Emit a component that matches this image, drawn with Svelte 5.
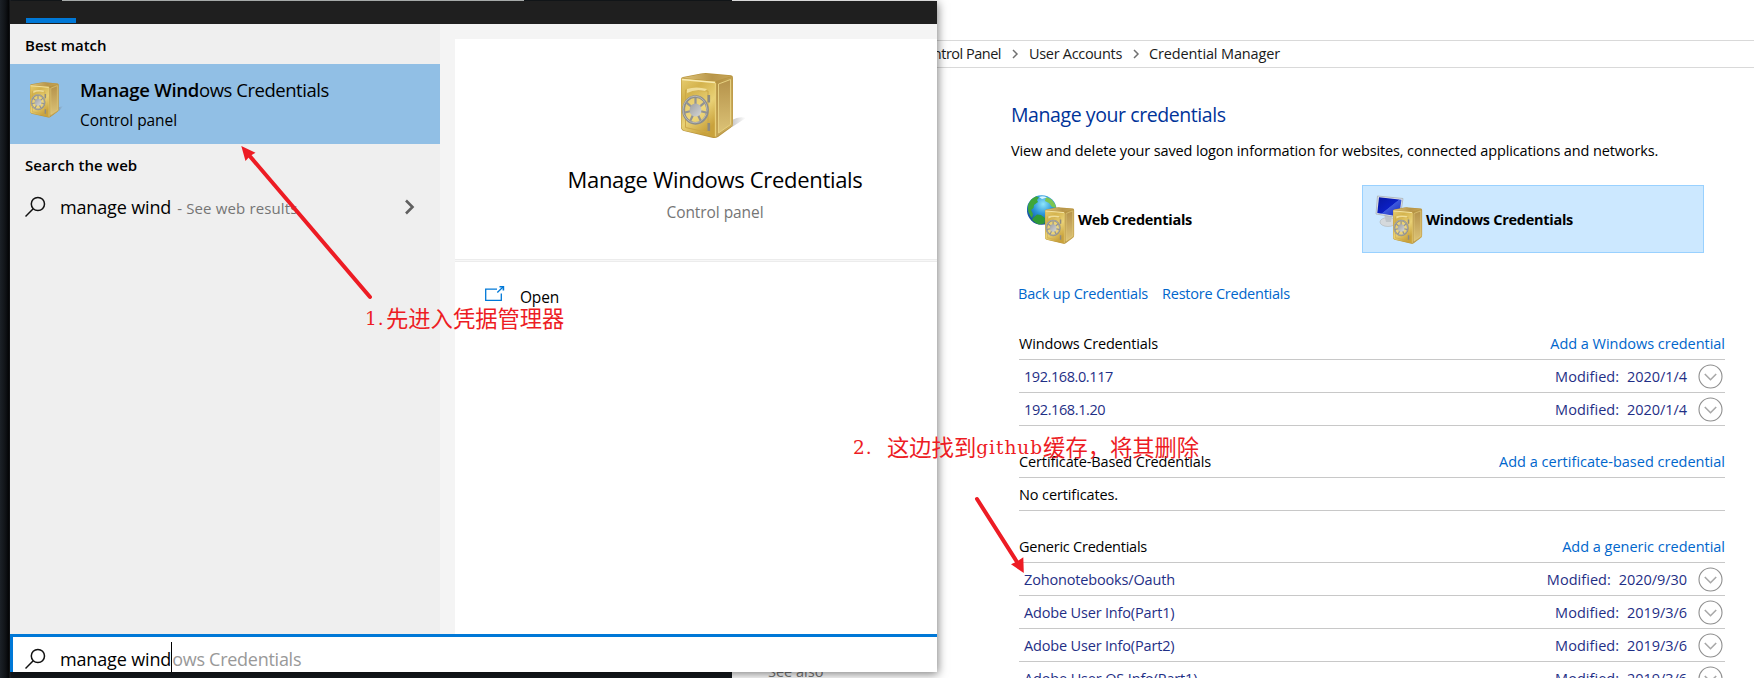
<script>
  const groups = [
    {
      title: 'Windows Credentials', ls: -0.16, link: 'Add a Windows credential', linkLs: -0.03,
      rows: [
        { name: '192.168.0.117', ls: -0.42, date: '2020/1/4' },
        { name: '192.168.1.20', ls: -0.4, date: '2020/1/4' }
      ]
    },
    {
      title: 'Certificate-Based Credentials', ls: -0.11, link: 'Add a certificate-based credential', linkLs: 0,
      empty: 'No certificates.', rows: []
    },
    {
      title: 'Generic Credentials', ls: -0.24, link: 'Add a generic credential', linkLs: -0.02,
      rows: [
        { name: 'Zohonotebooks/Oauth', ls: -0.16, date: '2020/9/30' },
        { name: 'Adobe User Info(Part1)', ls: -0.17, date: '2019/3/6' },
        { name: 'Adobe User Info(Part2)', ls: -0.17, date: '2019/3/6' },
        { name: 'Adobe User OS Info(Part1)', ls: -0.15, date: '2019/3/6' }
      ]
    }
  ];
  const spokes = [0, 51, 103, 154, 206, 257, 309];
</script>

{#snippet safe()}
  <path d="M0 6 Q0 4.500 2 4 L20 0.500 Q24 -0.200 28 0.300 L50 2.200 Q52 2.500 52 5 L52 50 Q52 53 50 54.500 L37 64 Q34.500 65.500 31 64.700 L3 58 Q0 57 0 54 Z" fill="#b8943e" />
  <path d="M1 5 L22 0.800 L51 3 L35 8 Z" fill="url(#lid)" />
  <path d="M34.500 8.500 L51.500 3.800 L51.500 52.500 L34.500 64.500 Z" fill="url(#side)" />
  <path d="M37.500 11 L49.500 6.500 L49.500 51.500 L37.500 60 Z" fill="url(#inset)" stroke="#e6d080" stroke-width="1" />
  <path d="M0.500 5.500 L34.500 8.500 L34.500 64.500 L3 57.500 Q0.500 56.500 0.500 54 Z" fill="url(#front)" />
  <path d="M4.500 17 L27 18 L27 59.500 L4.500 54.500 Z" fill="none" stroke="#cda849" stroke-width="1" />
  <path d="M6 16 Q15 13 26 16 L24 18 Q14 16 6 20 Z" fill="#f5e7ab" opacity=".8" />
  <path d="M1 6.500 L34 9.500" stroke="#f8eab0" stroke-width="1.500" />
  <path d="M34.500 10 V63.500" stroke="#e8cf77" stroke-width="1.300" />
  <path d="M27.800 22 V29.500 M27.800 50 V58" stroke="#8e8b80" stroke-width="2.600" />
  <ellipse cx="14.500" cy="37" rx="12" ry="13.300" fill="#f3dd83" fill-opacity=".55" stroke="#8c8d8b" stroke-width="2.800" />
  <ellipse cx="14" cy="36.500" rx="12" ry="13.300" fill="none" stroke="#c3c3c2" stroke-width=".8" />
  {#each spokes as a}
    <path d="M14.500 37 V25" stroke="#929393" stroke-width="2.200" transform={`rotate(${a} 14.500 37)`} />
  {/each}
  <ellipse cx="14.500" cy="37" rx="6" ry="6.600" fill="url(#hub)" />
{/snippet}

{#snippet magnifier()}
  <svg class="mag" width="22" height="22" viewBox="0 0 22 22" fill="none" stroke="#111" stroke-width="1.500">
    <circle cx="12.900" cy="8" r="6.600" /><path d="M8.200 12.700 L0.500 20.500" />
  </svg>
{/snippet}

<svg class="defs" width="0" height="0" aria-hidden="true">
  <defs>
    <linearGradient id="lid" x1="0" y1="0" x2="1" y2="0"><stop offset="0" stop-color="#dfc478" /><stop offset=".6" stop-color="#b8964b" /><stop offset="1" stop-color="#c7a557" /></linearGradient>
    <linearGradient id="side" x1="0" y1="0" x2="1" y2="1"><stop offset="0" stop-color="#b08d40" /><stop offset="1" stop-color="#d3b564" /></linearGradient>
    <linearGradient id="inset" x1="0" y1="0" x2="0" y2="1"><stop offset="0" stop-color="#b5924a" /><stop offset="1" stop-color="#dcc377" /></linearGradient>
    <linearGradient id="front" x1="0" y1="0" x2=".5" y2="1"><stop offset="0" stop-color="#e6cc70" /><stop offset=".3" stop-color="#d4b34d" /><stop offset=".65" stop-color="#e9d176" /><stop offset="1" stop-color="#c9a23c" /></linearGradient>
    <linearGradient id="hub" x1="0" y1="0" x2="1" y2="1"><stop offset="0" stop-color="#9d9fa1" /><stop offset="1" stop-color="#d5d6d7" /></linearGradient>
    <linearGradient id="shade" x1="0" y1="0" x2="1" y2="0"><stop offset="0" stop-color="#777" stop-opacity=".4" /><stop offset="1" stop-color="#777" stop-opacity="0" /></linearGradient>
    <radialGradient id="sea" cx=".55" cy=".3" r=".75"><stop offset="0" stop-color="#8fe5fb" /><stop offset=".45" stop-color="#2b96da" /><stop offset="1" stop-color="#123a91" /></radialGradient>
    <linearGradient id="screen" x1="0" y1="0" x2="1" y2="1"><stop offset="0" stop-color="#0717a0" /><stop offset=".5" stop-color="#0b1fc4" /><stop offset=".52" stop-color="#3d59dd" /><stop offset="1" stop-color="#1525b4" /></linearGradient>
  </defs>
</svg>

<div class="desktop">
  <main class="explorer">
    <nav class="crumbs">
      <span style:letter-spacing="-.5px">Control Panel</span>
      <svg width="28" height="12" viewBox="0 0 28 12"><path d="M12 2 L16 6 L12 10" /></svg>
      <span style:letter-spacing="-.3px">User Accounts</span>
      <svg width="27" height="12" viewBox="0 0 27 12"><path d="M12 2 L16 6 L12 10" /></svg>
      <span style:letter-spacing="-.13px">Credential Manager</span>
    </nav>
    <div class="body">
      <aside>See also</aside>
      <section class="content">
        <h1>Manage your credentials</h1>
        <p class="lead">View and delete your saved logon information for websites, connected applications and networks.</p>
        <div class="tiles">
          <div class="tile">
            <svg width="48" height="50" viewBox="0 0 48 50">
              <circle cx="14.700" cy="15" r="14.800" fill="url(#sea)" />
              <path d="M1.500 9 Q4 3 9.500 1.200 L12 2.500 L10 5 L11 7 L7 10 L6.500 13 L4 15 L6 19 L5 23 Q-0.500 17 1.500 9 Z" fill="#3fa63a" />
              <path d="M19 2 L24 4 Q29 9 29 13 L25 12 L22 8 L18 6 Z" fill="#7cc650" />
              <path d="M6 23 L10 19.500 L14 20 L18 23 L17.500 28.500 L12 29.500 Q8 28 5 25 Z" fill="#2f9a37" />
              <path d="M12 2 Q16 0.500 20 2.500 L15 4 Z" fill="#d9f7ff" />
              <g transform="translate(18 12.300) scale(.56)">{@render safe()}</g>
            </svg>
            <b style:letter-spacing="-.29px">Web Credentials</b>
          </div>
          <div class="tile selected">
            <svg width="48" height="50" viewBox="0 0 48 50">
              <ellipse cx="13" cy="27" rx="8" ry="4.500" fill="#d5d9dc" stroke="#b5babd" stroke-width=".7" />
              <path d="M9 19 L17 20 L16 27 L11 27 Z" fill="#bfc5c9" />
              <path d="M2.500 1 L28 3.500 L25 23 L1 19 Z" fill="#dfe3e6" stroke="#aab1b6" stroke-width=".8" />
              <path d="M4 2.300 L26.500 4.700 L24 21.500 L2.300 18 Z" fill="url(#screen)" />
              <g transform="translate(18 12.300) scale(.56)">{@render safe()}</g>
            </svg>
            <b style:letter-spacing="-.28px">Windows Credentials</b>
          </div>
        </div>
        <div class="actions">
          <a style:letter-spacing="-.2px">Back up Credentials</a>
          <a style:letter-spacing="-.23px">Restore Credentials</a>
        </div>
        {#each groups as g}
          <div class="group">
            <header>
              <span style:letter-spacing={`${g.ls}px`}>{g.title}</span>
              <a style:letter-spacing={`${g.linkLs}px`}>{g.link}</a>
            </header>
            {#if g.empty}<div class="row empty">{g.empty}</div>{/if}
            {#each g.rows as r}
              <div class="row">
                <span class="name" style:letter-spacing={`${r.ls}px`}>{r.name}</span>
                <span class="mod">Modified:</span>
                <span class="date">{r.date}</span>
                <svg width="25" height="25" viewBox="0 0 25 25" fill="none">
                  <circle cx="12.500" cy="12.500" r="11.500" stroke="#8f8f8f" stroke-width="1.100" />
                  <path d="M6.800 10 L12.500 15.700 L18.200 10" stroke="#a8a8a8" stroke-width="1.600" />
                </svg>
              </div>
            {/each}
          </div>
        {/each}
      </section>
    </div>
  </main>

  <div class="popup">
    <div class="tabs"><i></i></div>
    <div class="panes">
      <div class="results">
        <h2>Best match</h2>
        <div class="hit">
          <svg width="34" height="36" viewBox="0 0 64 67"><g transform="scale(1.040 1.020)"><path d="M52 46 L60 44 L52 54 Z" fill="url(#shade)" />{@render safe()}</g></svg>
          <div>
            <div class="name"><b>Manage Wind</b>ows Credentials</div>
            <div class="kind">Control panel</div>
          </div>
        </div>
        <h2 class="web">Search the web</h2>
        <div class="query">
          {@render magnifier()}
          <span class="typed">manage wind</span>
          <span class="hint">- See web results</span>
          <svg class="go" width="12" height="18" viewBox="0 0 12 18"><path d="M2 2.500 L8.500 9 L2 15.500" fill="none" stroke="#606060" stroke-width="2.600" /></svg>
        </div>
      </div>
      <div class="detail">
        <div class="card">
          <svg width="64" height="66" viewBox="2 0 64 66" overflow="visible"><path d="M51 47 Q58 43 65 45 L51 54 Z" fill="url(#shade)" />{@render safe()}</svg>
          <div class="big">Manage Windows Credentials</div>
          <div class="kind">Control panel</div>
        </div>
        <div class="open">
          <svg width="20" height="16" viewBox="0 0 20 16" fill="none" stroke="#0078d7" stroke-width="1.300">
            <path d="M12 3.200 H0.700 V14.300 H16.300 V7.500" /><path d="M12.300 6.500 L18 1" /><path d="M14.500 0.700 H18.400 V4.600" stroke-width="1.600" />
          </svg>
          <span>Open</span>
        </div>
      </div>
    </div>
    <div class="search">
      {@render magnifier()}
      <span class="typed">manage wind</span><i></i><span class="rest">ows Credentials</span>
    </div>
  </div>

  <svg class="arrows" width="1754" height="678" viewBox="0 0 1754 678" fill="#ed1c24" stroke="#ed1c24">
    <path d="M248 154 L370 297" stroke-width="4" stroke-linecap="round" />
    <path d="M241.300 146 L255.500 152.700 L250 156 L245.500 161 Z" stroke="none" />
    <path d="M977 499 L1017 562" stroke-width="4" stroke-linecap="round" />
    <path d="M1023.800 573 L1023.300 557.300 L1017 561.500 L1011 564.300 Z" stroke="none" />
  </svg>
  <div class="note one"><span>1.</span>先进入凭据管理器</div>
  <div class="note two"><span>2.</span>这边找到<em>github</em>缓存，将其删除</div>
</div>

<style>
  :global(body) { margin: 0; overflow: hidden; }
  .defs { position: absolute; }
  .desktop {
    position: relative; width: 1754px; height: 678px; overflow: hidden; display: flex; justify-content: flex-end;
    background: linear-gradient(90deg, #1d2228 0, #0f1216 6px, #0b0d10 7px, #050607 9px, #24272b 10px, #15191d 11px);
    font: 14.5px "Open Sans", "Noto Sans", sans-serif; color: #000; white-space: nowrap;
  }
  .desktop::before { content: ""; position: absolute; left: 62px; top: 0; width: 462px; height: 1px; background: #c5c9c8; }
  h1, h2, p { margin: 0; font-weight: 400; }
  a { color: #0066cc; }

  .explorer { width: 1022px; height: 678px; background: #fff; padding-top: 40px; box-sizing: border-box; }
  .crumbs {
    display: flex; align-items: center; height: 26px; line-height: 26px; padding-left: 184px;
    border-top: 1px solid #d9d9d9; border-bottom: 1px solid #d9d9d9; color: #1a1a1a;
  }
  .crumbs svg { fill: none; stroke: #707070; stroke-width: 1.5; }
  .body { display: flex; height: 610px; }
  aside { width: 279px; box-sizing: border-box; padding-left: 36px; height: 614px; display: flex; align-items: flex-end; line-height: 20px; color: #767676; flex: none; }
  .content { width: 714px; padding-top: 32px; }
  h1 { font-size: 19.5px; line-height: 30px; letter-spacing: -.42px; color: #003399; }
  .lead { margin-top: 10px; line-height: 22px; letter-spacing: -.13px; }
  .tiles { display: flex; gap: 6px; margin: 23px 0 0 3px; }
  .tile { display: flex; align-items: center; gap: 3px; width: 342px; height: 68px; box-sizing: border-box; padding-left: 12px; border: 1px solid transparent; }
  .tile svg { margin-top: 2px; }
  .selected { background: #cce8ff; border-color: #99d1ff; }
  .actions { display: flex; gap: 14px; margin: 30px 0 27px 7px; line-height: 22px; }
  .group { margin: 0 0 24px 8px; }
  .group header { display: flex; justify-content: space-between; height: 27px; line-height: 24px; border-bottom: 1px solid #c8c8c8; }
  .row { display: flex; align-items: center; height: 32px; line-height: 32px; border-bottom: 1px solid #c8c8c8; padding: 0 2px 0 5px; color: #1f2f86; }
  .row span { padding-top: 1px; height: 31px; }
  .row.empty { height: 31px; padding: 1px 0 0; color: #000; letter-spacing: -.11px; }
  .row .name { flex: 1; }
  .mod { letter-spacing: .04px; }
  .date { margin: 0 11px 0 8px; letter-spacing: -.06px; }

  .popup { position: absolute; left: 10px; top: 1px; width: 927px; height: 671px; display: flex; flex-direction: column; background: #fff; box-shadow: 1px 2px 9px rgba(0, 0, 0, .5); }
  .tabs { height: 23px; background: #1f1f1f; padding: 17px 0 0 16px; box-sizing: border-box; }
  .tabs i { display: block; width: 50px; height: 5px; background: #0078d7; }
  .panes { display: flex; height: 610px; }
  .results { width: 430px; background: #efefef; flex: none; }
  h2 { height: 40px; line-height: 43px; padding-left: 15px; font-size: 15px; font-weight: 600; letter-spacing: 0; }
  h2.web { height: 38px; letter-spacing: .08px; }
  .hit { display: flex; height: 80px; background: #91bfe5; box-sizing: border-box; padding: 13px 0 0 20px; }
  .hit svg { margin: 5px 16px 0 0; flex: none; }
  .hit .name { font-size: 18.5px; line-height: 26px; letter-spacing: -.47px; }
  .hit .name b { font-weight: 600; letter-spacing: -.26px; }
  .kind { margin-top: 6px; font-size: 15.5px; line-height: 22px; letter-spacing: -.07px; }
  .query { display: flex; align-items: center; height: 50px; padding-left: 15px; }
  .mag { flex: none; margin-right: 13px; }
  .typed { font-size: 18px; letter-spacing: -.15px; }
  .hint { font-size: 15px; letter-spacing: .14px; color: #757575; margin: 2px auto 0 6px; }
  .go { margin-right: 24px; }

  .detail { flex: 1; background: #f4f4f4; padding: 15px 0 0 15px; overflow: hidden; display: flex; flex-direction: column; }
  .card { width: 520px; height: 220px; box-sizing: border-box; background: #fff; padding-top: 34px; display: flex; flex-direction: column; align-items: center; }
  .big { margin-top: 25px; font-size: 22px; line-height: 30px; letter-spacing: -.32px; }
  .card .kind { color: #757575; margin-top: 7px; }
  .open { flex: 1; margin-top: 2px; display: flex; align-items: flex-start; background: #fff; border-top: 1px solid #ececec; box-shadow: 0 -1px 0 #f7f7f7, 0 -2px 0 #ececec; padding: 24px 0 0 30px; font-size: 15.5px; line-height: 22px; letter-spacing: -.19px; }
  .open svg { margin-right: 15px; }
  .search { display: flex; height: 35px; line-height: 45px; border-top: 3px solid #0078d7; border-left: 3px solid #0078d7; padding-left: 12px; overflow: hidden; font-size: 18px; }
  .search .mag { margin-top: 11px; }
  .search i { width: 1px; height: 30px; margin: 5px 0 0; background: #000; }
  .rest { color: #999; letter-spacing: -.27px; }

  .arrows { position: absolute; left: 0; top: 0; }
  .note { position: absolute; display: flex; color: #ed1c24; font: 22.3px/30px "Noto Sans CJK SC", sans-serif; }
  .note span, .note em { font: 18.5px/33px "DejaVu Serif", serif; letter-spacing: 1px; height: 30px; }
  .one { left: 365px; top: 302px; }
  .one span { width: 21px; }
  .two { left: 853px; top: 431px; }
  .two span { width: 34px; }
</style>
